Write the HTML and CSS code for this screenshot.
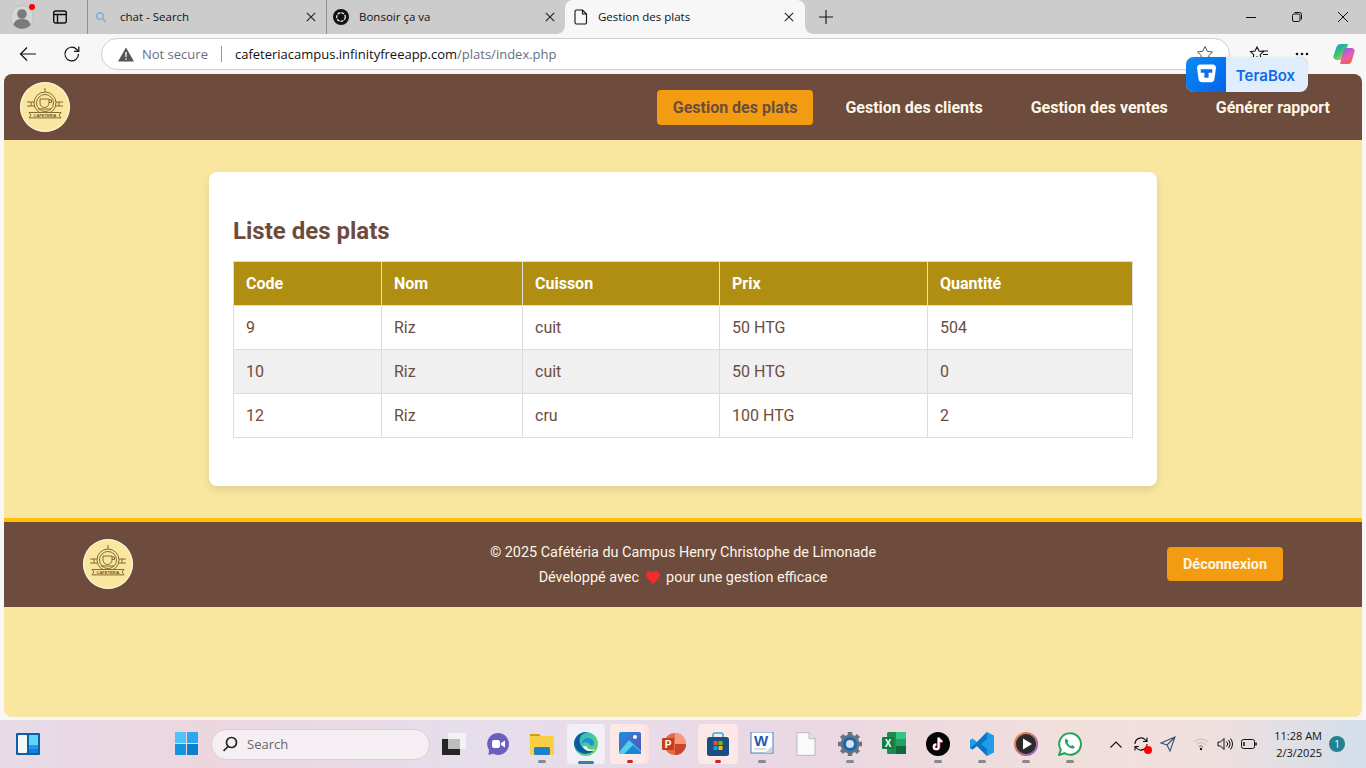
FILE: index.html
```html
<!DOCTYPE html>
<html lang="fr">

<head>
    <meta charset="UTF-8">
    <meta name="viewport" content="width=device-width, initial-scale=1.0">
    <title>Gestion des plats</title>
    <link rel="stylesheet" href="styles.css">
</head>

<body>
    <div class="tabstrip">
        <div class="strip-left">
            <span class="avatar">
                <svg width="24" height="24" viewBox="0 0 24 24"><circle cx="12" cy="12" r="11.500" fill="#d6d6d6" stroke="#bdbdbd"/><circle cx="12" cy="9" r="4.800" fill="#7b7b7b"/><path d="M3.500 20c1-4.500 4-6 8.500-6s7.500 1.500 8.500 6a11.500 11.500 0 0 1-17 0z" fill="#7b7b7b"/></svg>
                <span class="avatar-dot"></span>
            </span>
            <svg class="panel-icon" width="16" height="16" viewBox="0 0 16 16" fill="none" stroke="#111" stroke-width="1.400"><rect x="1.700" y="2" width="12.600" height="12" rx="2"/><path d="M1.700 5.500h12.600M5.500 5.500V14"/></svg>
        </div>
        <div class="tab">
            <svg class="tab-icon" width="12" height="12" viewBox="0 0 12 12" fill="none" stroke="#7eaedb" stroke-width="1.500"><circle cx="5" cy="5" r="3.300"/><path d="M7.500 7.500 11 11"/></svg>
            <span class="tab-title">chat - Search</span>
            <svg class="tab-close" width="10" height="10" viewBox="0 0 10 10" stroke="#222" stroke-width="1.100"><path d="M.8.800l8.400 8.400M9.200.800.800 9.200"/></svg>
        </div>
        <div class="tab tab-second">
            <svg class="tab-icon" width="16" height="16" viewBox="0 0 16 16"><circle cx="8" cy="8" r="8" fill="#111"/><circle cx="8" cy="8" r="4.300" fill="none" stroke="#ddd" stroke-width="1.400" stroke-dasharray="3 1"/></svg>
            <span class="tab-title">Bonsoir ça va</span>
            <svg class="tab-close" width="10" height="10" viewBox="0 0 10 10" stroke="#222" stroke-width="1.100"><path d="M.8.800l8.400 8.400M9.200.800.800 9.200"/></svg>
        </div>
        <div class="tab tab-active">
            <svg class="tab-icon" width="14" height="16" viewBox="0 0 14 16" fill="none" stroke="#111" stroke-width="1.100"><path d="M2.500 1h6l4 4v8.500a1.500 1.500 0 0 1-1.500 1.500H2.500A1.500 1.500 0 0 1 1 13.500v-11A1.500 1.500 0 0 1 2.500 1z"/><path d="M8.500 1v4h4"/></svg>
            <span class="tab-title">Gestion des plats</span>
            <svg class="tab-close" width="10" height="10" viewBox="0 0 10 10" stroke="#222" stroke-width="1.100"><path d="M.8.800l8.400 8.400M9.200.800.800 9.200"/></svg>
        </div>
        <svg class="new-tab" width="14" height="14" viewBox="0 0 14 14" stroke="#111" stroke-width="1.100"><path d="M7 0v14M0 7h14"/></svg>
        <div class="window-controls">
            <svg width="12" height="12" viewBox="0 0 12 12" stroke="#111"><path d="M1 6.500h10"/></svg>
            <svg width="12" height="12" viewBox="0 0 12 12" fill="none" stroke="#111"><rect x="1.500" y="3" width="7.500" height="7.500" rx="1.500"/><path d="M3.500 1.500h5a2 2 0 0 1 2 2v5"/></svg>
            <svg width="12" height="12" viewBox="0 0 12 12" stroke="#111"><path d="M1 1l10 10M11 1 1 11"/></svg>
        </div>
    </div>

    <div class="toolbar">
        <svg class="nav-back" width="18" height="16" viewBox="0 0 18 16" fill="none" stroke="#111" stroke-width="1.200"><path d="M17 8H1.500M8 1.500 1.500 8 8 14.500"/></svg>
        <svg class="nav-reload" width="18" height="18" viewBox="0 0 18 18" fill="none" stroke="#111" stroke-width="1.200"><path d="M15.500 9a6.800 6.800 0 1 1-2-4.800l2 2"/><path d="M15.800 1.500v4.800H11"/></svg>
        <div class="address">
            <svg class="warn" width="16" height="15" viewBox="0 0 16 15"><path d="M8 .5 16 14.500H0z" fill="#555"/><path d="M8 5v5M8 11.300v1.400" stroke="#fff" stroke-width="1.300"/></svg>
            <span class="not-secure">Not secure</span>
            <span class="address-sep"></span>
            <span class="url">cafeteriacampus.infinityfreeapp.com<span class="url-path">/plats/index.php</span></span>
            <svg class="star" width="18" height="18" viewBox="0 0 18 18" fill="none" stroke="#555"><path d="m9 1.500 2.300 4.800 5.200.7-3.800 3.600.9 5.200L9 13.300l-4.600 2.500.9-5.200L1.500 7l5.200-.7z"/></svg>
        </div>
        <svg class="favs" width="20" height="18" viewBox="0 0 20 18" fill="none" stroke="#111" stroke-width="1.100"><path d="m8 2 2 4 4.500.6-3.300 3.100.8 4.500-4-2.200-4 2.200.8-4.500L1.500 6.600 6 6zM13 6h6M14 9.500h5M12 13h7"/></svg>
        <svg class="more" width="14" height="4" viewBox="0 0 14 4" fill="#111"><circle cx="2" cy="2" r="1.300"/><circle cx="7" cy="2" r="1.300"/><circle cx="12" cy="2" r="1.300"/></svg>
        <svg class="copilot" width="22" height="22" viewBox="0 0 22 22">
            <defs>
                <linearGradient id="copA" x1="0" y1="0" x2=".7" y2="1"><stop offset="0" stop-color="#1596e8"/><stop offset=".55" stop-color="#36c27a"/><stop offset="1" stop-color="#efc91f"/></linearGradient>
                <linearGradient id="copB" x1=".2" y1="0" x2=".7" y2="1"><stop offset="0" stop-color="#8a5cf0"/><stop offset=".55" stop-color="#e85fb0"/><stop offset="1" stop-color="#f0603a"/></linearGradient>
            </defs>
            <path d="M7 1h8l-3.500 13a4 4 0 0 1-4 3H3.500A3.200 3.200 0 0 1 .6 12.800L3.500 4A4 4 0 0 1 7 1z" fill="url(#copA)"/>
            <path d="M15 5h3.500a3 3 0 0 1 3 4l-2.800 9a4 4 0 0 1-3.700 3H7l3.500-13A4 4 0 0 1 15 5z" fill="url(#copB)"/>
        </svg>
    </div>

    <div class="terabox">
        <span class="terabox-icon">
            <svg width="21" height="19" viewBox="0 0 20 18"><path d="M4 .5h12a3 3 0 0 1 3 3.500l-1.400 10a3.500 3.500 0 0 1-3.500 3.300H5.900a3.500 3.500 0 0 1-3.500-3.300L1 4A3 3 0 0 1 4 .5z" fill="#fff"/><path d="M4.500 5h11v3.200h-3.500V13H8V8.200H4.500z" fill="#0a6ff0"/></svg>
        </span>
        <span class="terabox-label">TeraBox</span>
    </div>

    <div class="page">
        <header class="site-header">
            <svg class="logo" width="50" height="50" viewBox="0 0 50 50">
                <circle cx="25" cy="25" r="25" fill="#f9e79f"/>
                <circle cx="25" cy="25" r="24.400" fill="none" stroke="#fff" stroke-opacity=".75"/>
                <g fill="none" stroke="#7a5a24" stroke-width=".9">
                    <circle cx="25" cy="21" r="11"/>
                    <circle cx="25" cy="21" r="8.500"/>
                    <path d="M7 20h7M7 24h7M36 20h7M36 24h7M11 20v4M39 20v4"/>
                    <path d="M20 17h9v4a4.500 4.500 0 0 1-9 0z" fill="#f9e79f"/>
                    <path d="M29 18h2.500v2.500H29M18 27h13"/>
                    <path d="M25 6c-1 1.500 1 2.500 0 4"/>
                    <path d="M9 30.500h32l-2 2.700 2 2.700H9l2-2.700z" fill="#f9e79f"/>
                </g>
                <text x="25" y="34.700" class="logo-text">CAFETERIA</text>
            </svg>
            <nav class="site-nav">
                <a class="nav-link active">Gestion des plats</a>
                <a class="nav-link">Gestion des clients</a>
                <a class="nav-link">Gestion des ventes</a>
                <a class="nav-link">Générer rapport</a>
            </nav>
        </header>

        <main class="content">
            <section class="card">
                <h2>Liste des plats</h2>
                <table>
                    <thead>
                        <tr>
                            <th class="col-code">Code</th>
                            <th class="col-nom">Nom</th>
                            <th class="col-cuisson">Cuisson</th>
                            <th class="col-prix">Prix</th>
                            <th>Quantité</th>
                        </tr>
                    </thead>
                    <tbody>
                        <tr><td>9</td><td>Riz</td><td>cuit</td><td>50 HTG</td><td>504</td></tr>
                        <tr><td>10</td><td>Riz</td><td>cuit</td><td>50 HTG</td><td>0</td></tr>
                        <tr><td>12</td><td>Riz</td><td>cru</td><td>100 HTG</td><td>2</td></tr>
                    </tbody>
                </table>
            </section>
        </main>

        <footer class="site-footer">
            <div class="footer-inner">
                <svg class="logo" width="50" height="50" viewBox="0 0 50 50">
                    <circle cx="25" cy="25" r="25" fill="#f9e79f"/>
                    <circle cx="25" cy="25" r="24.400" fill="none" stroke="#fff" stroke-opacity=".75"/>
                    <g fill="none" stroke="#7a5a24" stroke-width=".9">
                        <circle cx="25" cy="21" r="11"/>
                        <circle cx="25" cy="21" r="8.500"/>
                        <path d="M7 20h7M7 24h7M36 20h7M36 24h7M11 20v4M39 20v4"/>
                        <path d="M20 17h9v4a4.500 4.500 0 0 1-9 0z" fill="#f9e79f"/>
                        <path d="M29 18h2.500v2.500H29M18 27h13"/>
                        <path d="M25 6c-1 1.500 1 2.500 0 4"/>
                        <path d="M9 30.500h32l-2 2.700 2 2.700H9l2-2.700z" fill="#f9e79f"/>
                    </g>
                    <text x="25" y="34.700" class="logo-text">CAFETERIA</text>
                </svg>
                <div class="footer-text">
                    <p>© 2025 Cafétéria du Campus Henry Christophe de Limonade</p>
                    <p>Développé avec
                        <svg class="heart" width="14" height="13" viewBox="0 0 14 13"><path d="M7 13 1.200 7.200C-.4 5.600-.4 3 1.200 1.400s4-1.600 5.800.4c1.800-2 4.200-2 5.800-.4s1.600 4.200 0 5.800z" fill="#f22c2c"/></svg>
                        pour une gestion efficace</p>
                </div>
                <a class="logout">Déconnexion</a>
            </div>
        </footer>
    </div>

    <div class="taskbar">
        <div class="task-item task-widgets">
            <svg class="widgets-icon" width="24" height="22" viewBox="0 0 24 22"><rect width="24" height="22" rx="1" fill="#0f5fa8"/><rect x="2" y="2" width="9" height="18" rx="1" fill="#f4f6f8"/><rect x="13" y="2" width="9" height="10" fill="#5fd4fb"/><rect x="13" y="12" width="9" height="4" fill="#1e9ae8"/><rect x="13" y="16" width="9" height="4" fill="#1080d8"/></svg>
        </div>
        <div class="task-item">
            <svg width="23" height="23" viewBox="0 0 23 23"><rect width="11" height="11" fill="#4fc3f7"/><rect x="12" width="11" height="11" fill="#29a9ec"/><rect y="12" width="11" height="11" fill="#1592e0"/><rect x="12" y="12" width="11" height="11" fill="#0b7ed0"/></svg>
        </div>
        <div class="task-search">
            <svg width="16" height="16" viewBox="0 0 16 16" fill="none" stroke="#222" stroke-width="1.700"><circle cx="9.500" cy="6.500" r="5"/><path d="M6 10.500 1.500 15"/></svg>
            <span>Search</span>
        </div>
        <div class="task-item">
            <svg width="24" height="24" viewBox="0 0 24 24"><rect x="0" y="7" width="18" height="16" fill="#262626"/><rect x="6" y="1" width="18" height="16" fill="#f4f2f4"/><rect x="6" y="7" width="12" height="10" fill="#bdbdbd"/></svg>
        </div>
        <div class="task-item">
            <svg width="24" height="24" viewBox="0 0 24 24"><path d="M12 1a11 11 0 1 1-5 20.800L2.500 23 3 18A11 11 0 0 1 12 1z" fill="#6a5fc1"/><rect x="6" y="8" width="8" height="8" rx="2" fill="#fff"/><path d="m15 11 4-2.500v7L15 13z" fill="#fff"/></svg>
        </div>
        <div class="task-item">
            <svg width="24" height="24" viewBox="0 0 24 24"><path d="M0 2h9l2 2h1v18H0z" fill="#d99a0b"/><rect y="4" width="24" height="19" rx="1" fill="#fbcf45"/><rect x="4" y="15" width="16" height="8" rx="1.500" fill="#1f7fc8"/></svg>
            <span class="task-dot"></span>
        </div>
        <div class="task-item task-open">
            <svg width="24" height="24" viewBox="0 0 24 24"><defs><linearGradient id="edgeA" x1="0" y1="0" x2="1" y2="1"><stop offset="0" stop-color="#1fb5d6"/><stop offset="1" stop-color="#6fdc5a"/></linearGradient></defs><circle cx="12" cy="12" r="12" fill="url(#edgeA)"/><path d="M0 12A12 12 0 0 1 14 .2C7 1 4.500 6 6 11c1.500 6 8 9.500 14 7.500A12 12 0 0 1 0 12z" fill="#0c59a4"/><path d="M8 12c0-4 3-6 6-6s6 2 6 6c0 2-3 2-4 1-1-3-7-4-8-1z" fill="#1e90d8"/><path d="M9 14c1 4 6 6 11 4.500 1-.4 1-1 0-1-5 1-7-1-7-3z" fill="#fff"/></svg>
            <span class="task-dot dot-edge"></span>
        </div>
        <div class="task-item task-alert task-stack">
            <svg width="22" height="22" viewBox="0 0 22 22"><defs><linearGradient id="photoA" x1="0" y1="0" x2="1" y2="1"><stop offset="0" stop-color="#1f8fe0"/><stop offset="1" stop-color="#5b4fb0"/></linearGradient></defs><rect width="22" height="22" rx="2" fill="url(#photoA)"/><path d="M0 20 10 8l12 11v1a2 2 0 0 1-2 2H2a2 2 0 0 1-2-2z" fill="#4fd0ec"/><path d="M5 22 14 13l8 7v2z" fill="#1c86cf"/><circle cx="16" cy="5" r="2" fill="#fff"/></svg>
            <span class="task-dot dot-red"></span>
        </div>
        <div class="task-item">
            <svg width="24" height="24" viewBox="0 0 24 24"><circle cx="13" cy="12" r="11" fill="#e8694a"/><path d="M13 1a11 11 0 0 1 11 11H13z" fill="#f59a80"/><path d="M13 12h11a11 11 0 0 1-11 11z" fill="#c9452a"/><rect x="0" y="6" width="12" height="12" rx="1" fill="#c43e1c"/><text x="6" y="15.500" class="app-letter">P</text></svg>
        </div>
        <div class="task-item task-alert task-store">
            <svg width="24" height="24" viewBox="0 0 24 24"><path d="M7 6V3a2 2 0 0 1 2-2h6a2 2 0 0 1 2 2v3" fill="none" stroke="#25aee0" stroke-width="1.500"/><rect x="1" y="5" width="22" height="19" rx="2.500" fill="#1b4f82"/><rect x="7.500" y="9" width="4" height="4" fill="#f25022"/><rect x="12.500" y="9" width="4" height="4" fill="#7fba00"/><rect x="7.500" y="14" width="4" height="4" fill="#00a4ef"/><rect x="12.500" y="14" width="4" height="4" fill="#ffb900"/></svg>
            <span class="task-dot dot-red"></span>
        </div>
        <div class="task-item">
            <svg width="24" height="24" viewBox="0 0 24 24"><rect x="1" width="22" height="21" fill="#fff" stroke="#4a7cc0"/><path d="M15 21l7-7v7z" fill="#c8d4e4"/><path d="M4 17h12" stroke="#a9bedc"/><text x="11" y="14" class="app-letter word-letter">W</text></svg>
            <span class="task-dot"></span>
        </div>
        <div class="task-item">
            <svg width="20" height="24" viewBox="0 0 20 24"><path d="M1 .7h12l6 6v16.600H1z" fill="#fafafa" stroke="#b8b8b8"/><path d="M13 .7v6h6" fill="#e4e4e4" stroke="#b8b8b8"/></svg>
        </div>
        <div class="task-item">
            <svg width="24" height="24" viewBox="0 0 24 24"><path d="M12 0v24M0 12h24M3.500 3.500l17 17M20.500 3.500l-17 17" stroke="#68737f" stroke-width="4.500"/><circle cx="12" cy="12" r="9.500" fill="#68737f"/><circle cx="12" cy="12" r="5.500" fill="#d9e0e8" stroke="#1569b5" stroke-width="3"/></svg>
            <span class="task-dot"></span>
        </div>
        <div class="task-item">
            <svg width="24" height="22" viewBox="0 0 24 22"><rect x="5" width="19" height="22" rx="1.500" fill="#1f8a52"/><rect x="14" width="10" height="7" fill="#35c481"/><rect x="14" y="7" width="10" height="7" fill="#21a366"/><rect x="14" y="14" width="10" height="8" fill="#0e6a3c"/><rect y="5" width="12" height="12" rx="1" fill="#107c41"/><text x="6" y="14.500" class="app-letter">X</text></svg>
        </div>
        <div class="task-item">
            <svg width="24" height="24" viewBox="0 0 24 24"><circle cx="12" cy="12" r="12" fill="#050505"/><path d="M12.500 5.500v9.200a2.400 2.400 0 1 1-2.400-2.400" fill="none" stroke="#ff2d55" stroke-width="2.200" transform="translate(.8 .4)"/><path d="M12.500 5.500c.3 2.300 1.800 3.700 4 4M12.500 5.500v9.200a2.400 2.400 0 1 1-2.400-2.400" fill="none" stroke="#fff" stroke-width="2.200"/></svg>
            <span class="task-dot"></span>
        </div>
        <div class="task-item">
            <svg width="24" height="24" viewBox="0 0 24 24"><path d="M17 0 24 3.500v17L17 24 7 14 2.500 17.500 0 16v-8l2.500-1.500L7 10z" fill="#1f9ce8"/><path d="M17 0v24L7 14l-4.500 3.500L0 16l5-4 12-12zM17 7l-6 5 6 5z" fill="#0b74c4" fill-rule="evenodd"/></svg>
            <span class="task-dot"></span>
        </div>
        <div class="task-item">
            <svg width="24" height="24" viewBox="0 0 24 24"><defs><linearGradient id="playA" x1="0" y1="0" x2="1" y2="1"><stop offset="0" stop-color="#f08a3c"/><stop offset="1" stop-color="#8a5ac8"/></linearGradient></defs><circle cx="12" cy="12" r="12" fill="url(#playA)"/><circle cx="12" cy="12" r="10" fill="#2b2b2b"/><path d="M9 6.500 18 12l-9 5.500z" fill="#fff"/></svg>
            <span class="task-dot"></span>
        </div>
        <div class="task-item">
            <svg width="24" height="24" viewBox="0 0 24 24"><path d="M12 1.200a10.800 10.800 0 1 1-5.500 20L1 23l1.800-5.300A10.800 10.800 0 0 1 12 1.200z" fill="#fff" stroke="#25a35a" stroke-width="2"/><path d="M8 6.500c-2 1.500-1 5 1.500 7.500s6 3.500 7.500 1.500l-2.500-2.500-1.500 1c-1.500-.5-3-2-3.500-3.500l1-1.500z" fill="#25a35a"/></svg>
            <span class="task-dot"></span>
        </div>
        <div class="tray">
            <svg class="tray-chevron" width="12" height="7" viewBox="0 0 12 7" fill="none" stroke="#111" stroke-width="1.100"><path d="m.5 6.500 5.500-5.500 5.500 5.500"/></svg>
            <span class="tray-sync">
                <svg width="16" height="16" viewBox="0 0 16 16" fill="none" stroke="#111" stroke-width="1.100"><path d="M2 8a6 6 0 0 1 10.500-4l1.500 1.500M14 1.500v4h-4M14 8a6 6 0 0 1-10.500 4L2 10.500M2 14.500v-4h4"/></svg>
                <span class="sync-dot"></span>
            </span>
            <svg class="tray-send" width="16" height="16" viewBox="0 0 16 16" fill="none" stroke="#2c5a70" stroke-width="1.100"><path d="M15 1 1 7l6 2 3 6zM7 9l8-8"/></svg>
            <svg class="tray-wifi" width="16" height="14" viewBox="0 0 16 14" fill="none" stroke="#bbb"><path d="M1 5a10 10 0 0 1 14 0M3.500 7.500a6.500 6.500 0 0 1 9 0"/><path d="M5.800 9.800a3.200 3.200 0 0 1 4.400 0" stroke="#777"/><circle cx="8" cy="12" r="1.200" fill="#111" stroke="none"/></svg>
            <svg class="tray-volume" width="16" height="14" viewBox="0 0 16 14" fill="none" stroke="#111" stroke-width="1"><path d="M1 5h2.500L7 1.500v11L3.500 9H1zM9.500 4.500a3.500 3.500 0 0 1 0 5M11.500 3a6 6 0 0 1 0 8M13.500 1.500a8.500 8.500 0 0 1 0 11"/></svg>
            <svg class="tray-battery" width="16" height="10" viewBox="0 0 16 10" fill="none" stroke="#111"><rect x=".5" y=".5" width="13" height="9" rx="2"/><path d="M15 3.500v3" stroke-width="1.500"/><path d="M3 3v4" stroke-width="1.500"/></svg>
            <div class="clock">
                <span>11:28 AM</span>
                <span>2/3/2025</span>
            </div>
            <span class="notif">1</span>
        </div>
    </div>
</body>

</html>
```

FILE: styles.css
```css
* {
    box-sizing: border-box;
}

html,
body {
    height: 100%;
}

body {
    font-family: "Open Sans", "Noto Sans", sans-serif;
    margin: 0;
    width: 1366px;
    height: 768px;
    overflow: hidden;
    display: flex;
    flex-direction: column;
    background-color: #f7f7f7;
    color: #111;
}

.logo-text {
    font-family: "Liberation Sans", sans-serif;
    font-size: 4px;
    font-weight: 700;
    fill: #6f5222;
    text-anchor: middle;
}

/* browser tabs */
.tabstrip {
    height: 34px;
    flex: none;
    display: flex;
    align-items: center;
    background-color: #cccccc;
}

.strip-left {
    width: 88px;
    height: 34px;
    flex: none;
    display: flex;
    align-items: center;
    border-right: 1px solid #8f8f8f;
    background-clip: padding-box;
    padding-left: 10px;
    gap: 18px;
}

.avatar {
    position: relative;
    display: flex;
}

.avatar-dot {
    position: absolute;
    top: -1px;
    right: -1px;
    width: 6px;
    height: 6px;
    border-radius: 50%;
    background-color: #f00;
}

.tab {
    width: 238px;
    height: 34px;
    flex: none;
    display: flex;
    align-items: center;
    padding: 0 10px 0 7px;
    font-size: 11.5px;
}

.tab-second {
    width: 239px;
    border-left: 1px solid #8f8f8f;
    padding-left: 6px;
}

.tab-icon {
    flex: none;
}

.tab-title {
    flex: 1;
    margin: 0 0 2px 13px;
    white-space: nowrap;
}

.tab-second .tab-title {
    margin-left: 10px;
}

.tab-active {
    width: 240px;
    height: 34px;
    background-color: #f7f7f7;
    border-radius: 8px 8px 0 0;
    padding: 0 11px 0 9px;
    position: relative;
}

.tab-active::before,
.tab-active::after {
    content: "";
    position: absolute;
    bottom: 0;
    width: 8px;
    height: 8px;
}

.tab-active::before {
    left: -8px;
    background: radial-gradient(circle at 0 0, transparent 7.5px, #f7f7f7 8px);
}

.tab-active::after {
    right: -8px;
    background: radial-gradient(circle at 100% 0, transparent 7.5px, #f7f7f7 8px);
}

.tab-active .tab-title {
    margin-left: 10px;
}

.new-tab {
    margin-left: 14px;
    flex: none;
}

.window-controls {
    margin-left: auto;
    display: flex;
    gap: 34px;
    padding-right: 17px;
}

/* address bar */
.toolbar {
    height: 40px;
    flex: none;
    display: flex;
    align-items: center;
    background-color: #f7f7f7;
    padding-left: 19px;
}

.nav-reload {
    margin-left: 26px;
}

.address {
    width: 1129px;
    height: 32px;
    margin-left: 20px;
    display: flex;
    align-items: center;
    padding: 0 15px 0 16px;
    background-color: #fff;
    border: 1px solid #cfcfcf;
    border-radius: 16px;
    font-size: 13px;
    white-space: nowrap;
}

.not-secure {
    margin-left: 8px;
    color: #66707e;
}

.address-sep {
    width: 1px;
    height: 16px;
    margin: 0 13px;
    background-color: #999;
}

.url-path {
    color: #66707e;
}

.star {
    margin-left: auto;
}

.favs {
    margin-left: 19px;
}

.more {
    margin-left: 26px;
}

.copilot {
    margin-left: 24px;
}

.terabox {
    position: absolute;
    left: 1186px;
    top: 57px;
    width: 122px;
    height: 35px;
    display: flex;
    border-radius: 8px;
    overflow: hidden;
    background-color: #e0edfd;
    box-shadow: 0 0 1px rgba(0, 0, 0, 0.3);
    z-index: 2;
}

.terabox-icon {
    width: 40px;
    display: flex;
    align-items: center;
    justify-content: center;
    background: linear-gradient(135deg, #0a8cf5, #0562e8);
    padding-bottom: 2px;
}

.terabox-label {
    flex: 1;
    text-align: center;
    padding-right: 3px;
    line-height: 37px;
    font-family: Inter, sans-serif;
    font-size: 15px;
    font-weight: 600;
    color: #0b6bea;
}

/* the site itself */
.page {
    width: 1358px;
    height: 643px;
    flex: none;
    margin: 0 4px 3px;
    display: flex;
    flex-direction: column;
    background-color: #f9e79f;
    border-radius: 8px;
    overflow: hidden;
    font-family: Roboto, sans-serif;
}

.site-header {
    height: 66px;
    flex: none;
    display: flex;
    align-items: center;
    justify-content: space-between;
    padding: 0 16px;
    background-color: #6d4c3d;
}

.logo {
    display: block;
    flex: none;
}

.site-nav {
    display: flex;
    gap: 16px;
}

.nav-link {
    padding: 0 16px;
    height: 35px;
    line-height: 35px;
    font-size: 16px;
    font-weight: 700;
    color: #fdf5e6;
    border-radius: 4px;
}

.nav-link.active {
    background-color: #f39c12;
    color: #6d4c3d;
}

.content {
    padding: 32px 0;
    display: flex;
    justify-content: center;
}

.card {
    width: 948px;
    height: 314px;
    padding: 24px;
    background-color: #fff;
    border-radius: 8px;
    box-shadow: 0 4px 8px rgba(0, 0, 0, 0.1);
}

h2 {
    margin: 21px 0 16px;
    font-size: 24px;
    line-height: 28px;
    font-weight: 700;
    color: #6d4c3d;
}

table {
    width: 900px;
    border-collapse: collapse;
    table-layout: fixed;
    font-size: 16px;
    color: #6d4c3d;
}

th,
td {
    height: 44px;
    padding: 0 12px;
    text-align: left;
    border: 1px solid #dddddd;
}

th {
    background-color: #af8e11;
    color: #fff;
    font-weight: 700;
}

tbody tr:nth-child(even) {
    background-color: #f0f0f0;
}

.col-code {
    width: 148px;
}

.col-nom {
    width: 141px;
}

.col-cuisson {
    width: 197px;
}

.col-prix {
    width: 208px;
}

.site-footer {
    height: 89px;
    flex: none;
    border-top: 4px solid #ffc107;
    padding-bottom: 1px;
    background-color: #6d4c3d;
    display: flex;
    align-items: center;
    justify-content: center;
}

.footer-inner {
    width: 1200px;
    display: grid;
    grid-template-columns: 1fr auto 1fr;
    align-items: center;
}

.footer-text {
    padding-top: 2px;
    text-align: center;
    font-size: 14.4px;
    line-height: 25px;
    color: #fdf5e6;
}

.footer-text p {
    margin: 0;
}

.heart {
    vertical-align: -2px;
    margin: 0 3px;
}

.logout {
    justify-self: end;
    width: 116px;
    height: 34px;
    line-height: 36px;
    text-align: center;
    font-size: 14.4px;
    font-weight: 700;
    color: #fdf5e6;
    background-color: #f39c12;
    border-radius: 4px;
}

/* windows taskbar */
.taskbar {
    height: 48px;
    flex: none;
    display: flex;
    padding: 4px 0 0 6px;
    background: linear-gradient(90deg, #e6dbe8, #ecd6de 15%, #e6deec 35%, #ead7e2 60%, #f1dfdc 78%, #f0e0dd 88%, #d3deea);
}

.task-item {
    width: 44px;
    height: 40px;
    flex: none;
    display: flex;
    flex-direction: column;
    align-items: center;
    border-radius: 4px;
    position: relative;
}

.task-item svg {
    position: absolute;
    top: 8px;
}

.task-item .widgets-icon {
    top: 9px;
}

.task-widgets {
    margin-right: 114px;
}

.task-dot {
    position: absolute;
    bottom: 1px;
    width: 8px;
    height: 3px;
    border-radius: 2px;
    background-color: #88888e;
}

.dot-edge {
    width: 16px;
    bottom: 0;
    background-color: #2a8a96;
}

.dot-red {
    width: 6px;
    background-color: #d32020;
}

.task-open {
    width: 38px;
    margin: 0 3px;
    background-color: #f3eff6;
}

.task-alert {
    background-color: #fde8e8;
}

.task-store {
    width: 40px;
    margin: 0 2px;
}

.task-stack {
    width: 34px;
    margin: 0 8px 0 2px;
    box-shadow: 6px 0 0 -1px #fbe3e3;
}

.task-stack svg {
    left: 9px;
}

.task-stack .task-dot {
    left: 17px;
}

.task-search {
    width: 219px;
    height: 31px;
    margin: 5px 2px 0 3px;
    flex: none;
    display: flex;
    align-items: center;
    gap: 9px;
    padding: 0 0 2px 10px;
    background-color: #f5eff3;
    border: 1px solid #dccfd6;
    border-radius: 16px;
    font-size: 13px;
    color: #666;
}

.tray {
    margin-left: 18px;
    flex: 1;
    height: 40px;
    display: flex;
    align-items: center;
}

.tray-sync {
    position: relative;
    display: flex;
    margin-left: 11px;
}

.sync-dot {
    position: absolute;
    right: -3px;
    bottom: -2px;
    width: 8px;
    height: 8px;
    border-radius: 50%;
    background-color: #f00;
}

.tray-send {
    margin-left: 11px;
}

.tray-wifi {
    margin-left: 17px;
}

.tray-volume {
    margin-left: 8px;
}

.tray-battery {
    margin-left: 8px;
}

.clock {
    width: 48px;
    margin-left: 17px;
    display: flex;
    flex-direction: column;
    align-items: flex-end;
    font-size: 11px;
    line-height: 17px;
    white-space: nowrap;
}

.notif {
    width: 16px;
    height: 16px;
    margin-left: 7px;
    border-radius: 50%;
    background-color: #23828f;
    color: #fff;
    font-size: 10px;
    line-height: 16px;
    text-align: center;
}

.app-letter {
    font-family: "Liberation Sans", sans-serif;
    font-size: 10px;
    font-weight: 700;
    fill: #fff;
    text-anchor: middle;
}

.word-letter {
    font-size: 15px;
    fill: #1f5cb0;
}
```
